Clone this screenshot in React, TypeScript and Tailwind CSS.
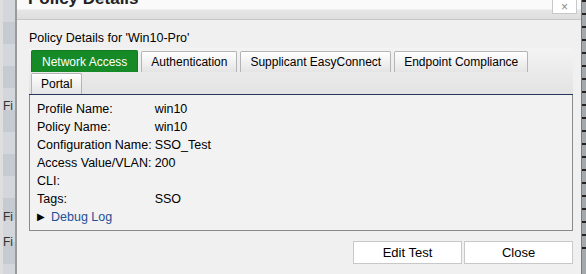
import React from 'react'

const tabs = ['Network Access', 'Authentication', 'Supplicant EasyConnect', 'Endpoint Compliance', 'Portal']

const rows: [string, string][] = [
	['Profile Name:', 'win10'],
	['Policy Name:', 'win10'],
	['Configuration Name:', 'SSO_Test'],
	['Access Value/VLAN:', '200'],
	['CLI:', ''],
	['Tags:', 'SSO'],
]

const stripes = ['bg-[#d3d6db]', 'bg-[#c6cbd2]']

const App = () => {
	return (
		<div className="flex w-[586px] h-[274px] overflow-hidden bg-[#f0f0f0] text-black font-['Liberation_Sans',Arial,sans-serif]">
			{/* page behind the dialog */}
			<div className="flex w-[15px] shrink-0">
				<div className="w-[3px] bg-[#dedede]" />
				<div className="flex flex-col flex-1 overflow-hidden">
					{Array.from({ length: 13 }).map((_, i) => (
						<div key={i} className={`h-[22px] shrink-0 ${stripes[i % 2]}`} />
					))}
				</div>
			</div>
			<div className="w-[2px] shrink-0 bg-[#9a9a9a]" />

			{/* dialog */}
			<div className="relative flex flex-col flex-1 bg-[#f0f0f0]">
				<div className="relative h-[20px] shrink-0 border-b border-[#c6c6c6] bg-[linear-gradient(#fafafa_0px,#fafafa_9px,#e6e6e6_10px,#dedede_19px)] overflow-hidden">
					<div className="absolute left-[11px] -top-[11px] text-[17px] font-bold leading-[20px] text-[#222]">Policy Details</div>
					<div className="absolute right-[4px] -top-px w-[25px] h-[15px] bg-white border border-[#c8c8c8] flex items-end justify-center text-[12px] leading-[12px] text-[#888]">
						×
					</div>
				</div>

				<div className="flex flex-col pl-[12px] pr-[8px]">
					<div className="mt-[10px] text-[12.5px] leading-[16px]">Policy Details for 'Win10-Pro'</div>

					<div className="mt-[2px] flex flex-wrap gap-x-[3px] pl-[2px] pt-[2px] border-b border-[#24365a] bg-[linear-gradient(#f3f3f3,#e3e3e3)]">
						{tabs.map((t, i) =>
							i === 0 ? (
								<div key={t} className="h-[22px] px-[10px] flex items-center whitespace-nowrap bg-[#158a26] text-white text-[12px] border border-[#127a20] border-b-0 rounded-t-[2px]">
									{t}
								</div>
							) : (
								<div key={t} className="h-[21px] mt-px px-[9px] flex items-center whitespace-nowrap bg-[linear-gradient(#ffffff,#e4e4e4)] text-[12px] border border-[#b4b4b4] border-b-0 rounded-t-[2px]">
									{t}
								</div>
							)
						)}
					</div>

					<div className="border border-t-0 border-[#8a8a8a] bg-[#f2f2f2] pl-[7px] pt-[5px] pb-[4px] text-[12.5px]">
						<div className="grid grid-cols-[max-content_1fr] gap-x-[3px] auto-rows-[18px] items-center whitespace-nowrap">
							{rows.map(([k, v]) => (
								<React.Fragment key={k}>
									<span>{k}</span>
									<span>{v}</span>
								</React.Fragment>
							))}
						</div>
						<div className="flex h-[18px] items-center gap-[6px]">
							<span className="text-[10px] leading-none">▶</span>
							<span className="text-[#1f4f95]">Debug Log</span>
						</div>
					</div>

					<div className="mt-[10px] flex justify-end gap-[2px]">
						<button className="w-[109px] h-[23px] bg-white border border-[#c8c8c8] text-[13px]">Edit Test</button>
						<button className="w-[109px] h-[23px] bg-white border border-[#c8c8c8] text-[13px]">Close</button>
					</div>
				</div>
			</div>

			{/* right edge */}
			<div className="w-px shrink-0 bg-[#7c7c7c]" />
			<div className="flex flex-col w-[4px] shrink-0 bg-[#a3a8ad]">
				{Array.from({ length: 20 }).map((_, i) => (
					<div key={i} className="h-[13px] shrink-0 border-t-2 border-[#222]" />
				))}
			</div>

			{/* clipped text of the page behind */}
			<div className="absolute left-[3px] top-[97px] text-[12px] text-[#333]">Fi</div>
			<div className="absolute left-[3px] top-[208px] text-[12px] text-[#333]">Fi</div>
			<div className="absolute left-[3px] top-[233px] text-[12px] text-[#333]">Fi</div>
		</div>
	)
}

export default App
